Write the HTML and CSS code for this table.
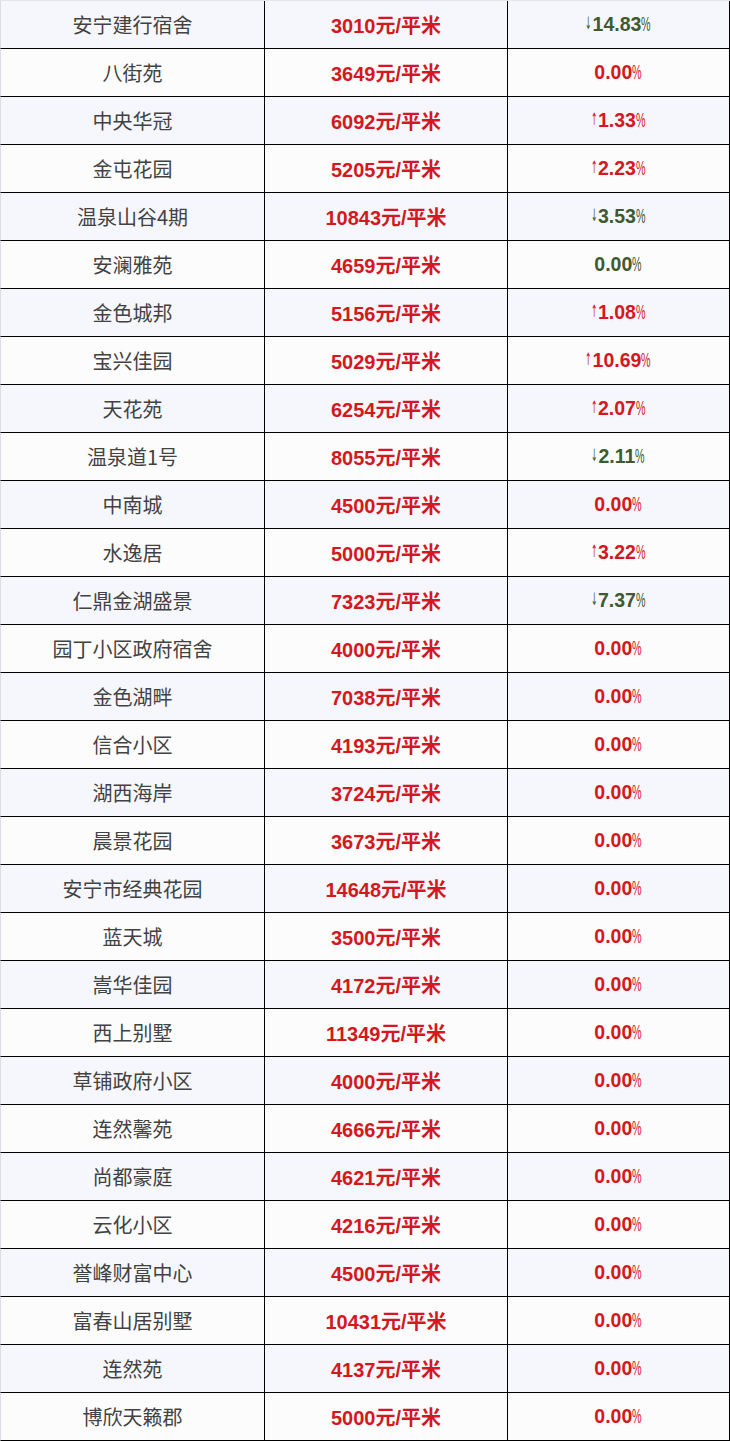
FILE: index.html
```html
<!DOCTYPE html>
<html lang="zh">
<head>
<meta charset="utf-8">
<title>安宁楼盘价格</title>
<link rel="stylesheet" href="styles.css">
</head>
<body>
<table class="prices">
<tbody>
<tr class="odd"><td class="name">安宁建行宿舍</td><td class="price">3010元/平米</td><td class="chg down"><span class="arr">↓</span>14.83<span class="pc">%</span></td></tr>
<tr><td class="name">八街苑</td><td class="price">3649元/平米</td><td class="chg">0.00<span class="pc">%</span></td></tr>
<tr class="odd"><td class="name">中央华冠</td><td class="price">6092元/平米</td><td class="chg"><span class="arr">↑</span>1.33<span class="pc">%</span></td></tr>
<tr><td class="name">金屯花园</td><td class="price">5205元/平米</td><td class="chg"><span class="arr">↑</span>2.23<span class="pc">%</span></td></tr>
<tr class="odd"><td class="name">温泉山谷4期</td><td class="price">10843元/平米</td><td class="chg down"><span class="arr">↓</span>3.53<span class="pc">%</span></td></tr>
<tr><td class="name">安澜雅苑</td><td class="price">4659元/平米</td><td class="chg down">0.00<span class="pc">%</span></td></tr>
<tr class="odd"><td class="name">金色城邦</td><td class="price">5156元/平米</td><td class="chg"><span class="arr">↑</span>1.08<span class="pc">%</span></td></tr>
<tr><td class="name">宝兴佳园</td><td class="price">5029元/平米</td><td class="chg"><span class="arr">↑</span>10.69<span class="pc">%</span></td></tr>
<tr class="odd"><td class="name">天花苑</td><td class="price">6254元/平米</td><td class="chg"><span class="arr">↑</span>2.07<span class="pc">%</span></td></tr>
<tr><td class="name">温泉道1号</td><td class="price">8055元/平米</td><td class="chg down"><span class="arr">↓</span>2.11<span class="pc">%</span></td></tr>
<tr class="odd"><td class="name">中南城</td><td class="price">4500元/平米</td><td class="chg">0.00<span class="pc">%</span></td></tr>
<tr><td class="name">水逸居</td><td class="price">5000元/平米</td><td class="chg"><span class="arr">↑</span>3.22<span class="pc">%</span></td></tr>
<tr class="odd"><td class="name">仁鼎金湖盛景</td><td class="price">7323元/平米</td><td class="chg down"><span class="arr">↓</span>7.37<span class="pc">%</span></td></tr>
<tr><td class="name">园丁小区政府宿舍</td><td class="price">4000元/平米</td><td class="chg">0.00<span class="pc">%</span></td></tr>
<tr class="odd"><td class="name">金色湖畔</td><td class="price">7038元/平米</td><td class="chg">0.00<span class="pc">%</span></td></tr>
<tr><td class="name">信合小区</td><td class="price">4193元/平米</td><td class="chg">0.00<span class="pc">%</span></td></tr>
<tr class="odd"><td class="name">湖西海岸</td><td class="price">3724元/平米</td><td class="chg">0.00<span class="pc">%</span></td></tr>
<tr><td class="name">晨景花园</td><td class="price">3673元/平米</td><td class="chg">0.00<span class="pc">%</span></td></tr>
<tr class="odd"><td class="name">安宁市经典花园</td><td class="price">14648元/平米</td><td class="chg">0.00<span class="pc">%</span></td></tr>
<tr><td class="name">蓝天城</td><td class="price">3500元/平米</td><td class="chg">0.00<span class="pc">%</span></td></tr>
<tr class="odd"><td class="name">嵩华佳园</td><td class="price">4172元/平米</td><td class="chg">0.00<span class="pc">%</span></td></tr>
<tr><td class="name">西上别墅</td><td class="price">11349元/平米</td><td class="chg">0.00<span class="pc">%</span></td></tr>
<tr class="odd"><td class="name">草铺政府小区</td><td class="price">4000元/平米</td><td class="chg">0.00<span class="pc">%</span></td></tr>
<tr><td class="name">连然馨苑</td><td class="price">4666元/平米</td><td class="chg">0.00<span class="pc">%</span></td></tr>
<tr class="odd"><td class="name">尚都豪庭</td><td class="price">4621元/平米</td><td class="chg">0.00<span class="pc">%</span></td></tr>
<tr><td class="name">云化小区</td><td class="price">4216元/平米</td><td class="chg">0.00<span class="pc">%</span></td></tr>
<tr class="odd"><td class="name">誉峰财富中心</td><td class="price">4500元/平米</td><td class="chg">0.00<span class="pc">%</span></td></tr>
<tr><td class="name">富春山居别墅</td><td class="price">10431元/平米</td><td class="chg">0.00<span class="pc">%</span></td></tr>
<tr class="odd"><td class="name">连然苑</td><td class="price">4137元/平米</td><td class="chg">0.00<span class="pc">%</span></td></tr>
<tr><td class="name">博欣天籁郡</td><td class="price">5000元/平米</td><td class="chg">0.00<span class="pc">%</span></td></tr>
</tbody>
</table>
</body>
</html>
```

FILE: styles.css
```css
html, body {
  margin: 0;
  padding: 0;
  background: #ffffff;
}

.prices {
  width: 730px;
  table-layout: fixed;
  border-collapse: separate;
  border-spacing: 0;
  border-top: 1px solid #e4e5ea;
  font-family: "Liberation Sans", "Noto Sans CJK SC", sans-serif;
}

.prices tr {
  background: #fdfcfd;
}

.prices tr.odd {
  background: #f6f7fc;
}

.prices td {
  box-sizing: border-box;
  height: 48px;
  padding: 0;
  text-align: center;
  vertical-align: middle;
  border-bottom: 1px solid #000;
  border-right: 1px solid #000;
  white-space: nowrap;
}

.prices td.name {
  width: 265px;
  border-left: 1px solid #dcdde3;
  font-family: "Noto Sans CJK SC", sans-serif;
  font-size: 20px;
  font-weight: 400;
  color: #424242;
}

.prices td.price {
  width: 243px;
  font-size: 20px;
  font-weight: 700;
  color: #d5171e;
}

.prices td.chg {
  width: 222px;
  font-size: 19.5px;
  font-weight: 700;
  color: #d5171e;
}

.prices td.chg.down {
  color: #3f5a30;
}

.arr {
  display: inline-block;
  font-family: "DejaVu Sans", sans-serif;
  font-weight: 400;
  font-size: 17px;
  transform: scaleX(0.45);
  margin: 0 -3px 0 -4px;
  vertical-align: 2px;
}

.pc {
  display: inline-block;
  transform: scaleX(0.55);
  transform-origin: left center;
  margin-right: -7px;
  font-weight: 400;
}
```
